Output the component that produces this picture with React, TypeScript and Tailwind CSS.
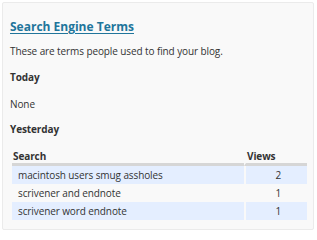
const rows = [
  { term: "macintosh users smug assholes", views: 2 },
  { term: "scrivener and endnote", views: 1 },
  { term: "scrivener word endnote", views: 1 },
];

export default function App() {
  return (
    <div className="h-[240px] w-[317px] bg-white pl-[2px] pt-[2px] font-['Open_Sans',sans-serif] text-[#333]">
      <div className="h-[228px] w-[312px] rounded-[2px] border border-[#ebebeb] bg-[#f9f9f9] pl-[7px] pr-[6px] pt-[15px] text-[10px] tracking-[-0.1px]">
        <h2 className="text-[12px] font-bold leading-[18px] tracking-normal text-[#21759b] underline underline-offset-2">
          <a href="#">Search Engine Terms</a>
        </h2>
        <p className="mt-[8px] leading-[14px]">
          These are terms people used to find your blog.
        </p>
        <h3 className="mt-[12px] font-bold leading-[14px]">Today</h3>
        <p className="mt-[13px] leading-[14px]">None</p>
        <h3 className="mt-[11px] font-bold leading-[14px]">Yesterday</h3>
        <table className="ml-[2px] mt-[13px] w-[295px] border-separate border-spacing-0">
          <thead>
            <tr className="font-bold">
              <th className="border-b-[3px] border-[#d6d6d6] pl-[1px] text-left leading-[14px]">
                Search
              </th>
              <th className="w-[63px] border-b-[3px] border-l-2 border-[#d6d6d6] border-l-[#f9f9f9] pl-[1px] text-left leading-[14px]">
                Views
              </th>
            </tr>
          </thead>
          <tbody>
            {rows.map((r, i) => (
              <tr key={r.term} className={i % 2 === 0 ? "bg-[#e4eeff]" : ""}>
                <td className="h-[18px] pl-[6px] leading-[14px]">{r.term}</td>
                <td className="h-[18px] border-l-2 border-[#f9f9f9] pr-[26px] text-right leading-[14px]">
                  {r.views}
                </td>
              </tr>
            ))}
          </tbody>
        </table>
      </div>
    </div>
  );
}
